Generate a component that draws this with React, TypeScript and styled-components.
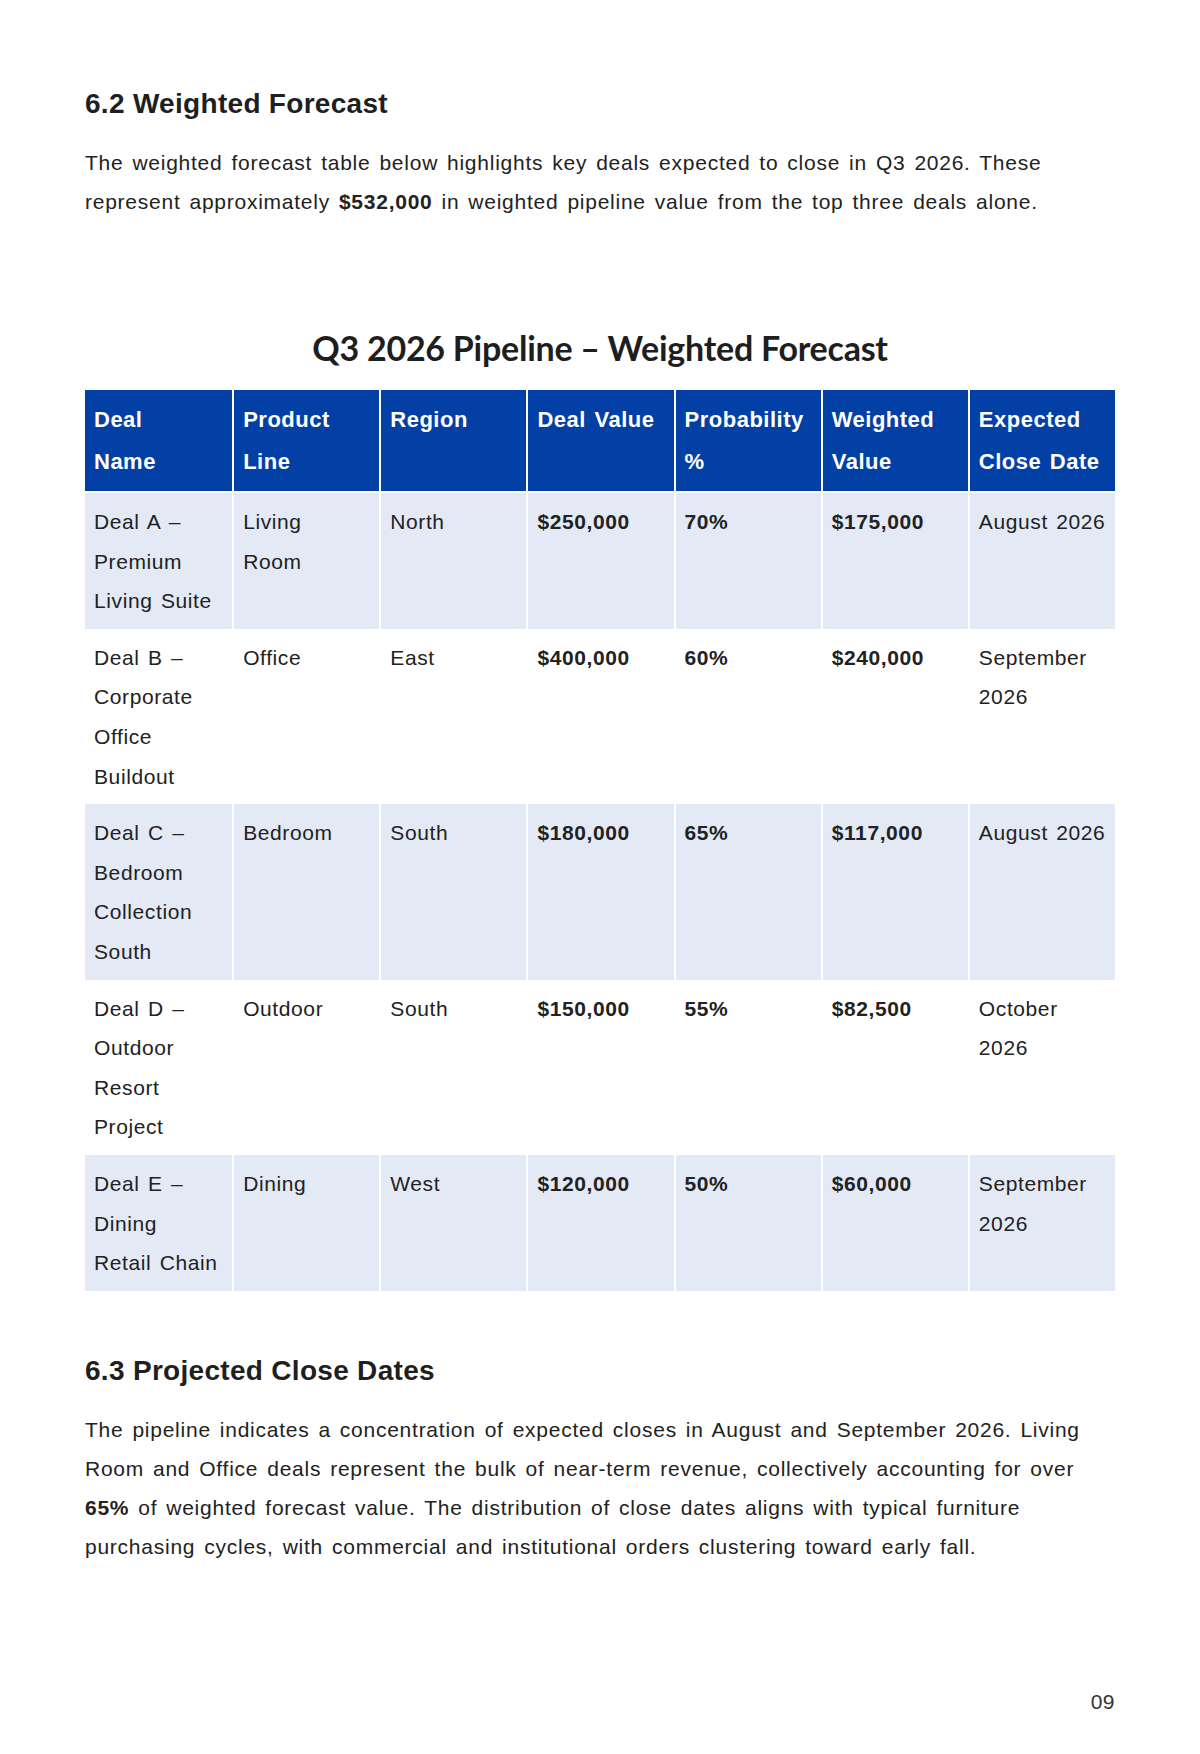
import React from "react";
import styled, { createGlobalStyle } from "styled-components";

type Deal = {
  name: string;
  line: string;
  region: string;
  value: string;
  probability: string;
  weighted: string;
  close: string;
};

const columns = [
  "Deal\nName",
  "Product\nLine",
  "Region",
  "Deal Value",
  "Probability\n%",
  "Weighted\nValue",
  "Expected\nClose Date",
];

// line breaks follow the layout of the printed report
const deals: Deal[] = [
  {
    name: "Deal A –\nPremium\nLiving Suite",
    line: "Living\nRoom",
    region: "North",
    value: "$250,000",
    probability: "70%",
    weighted: "$175,000",
    close: "August 2026",
  },
  {
    name: "Deal B –\nCorporate\nOffice\nBuildout",
    line: "Office",
    region: "East",
    value: "$400,000",
    probability: "60%",
    weighted: "$240,000",
    close: "September\n2026",
  },
  {
    name: "Deal C –\nBedroom\nCollection\nSouth",
    line: "Bedroom",
    region: "South",
    value: "$180,000",
    probability: "65%",
    weighted: "$117,000",
    close: "August 2026",
  },
  {
    name: "Deal D –\nOutdoor\nResort\nProject",
    line: "Outdoor",
    region: "South",
    value: "$150,000",
    probability: "55%",
    weighted: "$82,500",
    close: "October\n2026",
  },
  {
    name: "Deal E –\nDining\nRetail Chain",
    line: "Dining",
    region: "West",
    value: "$120,000",
    probability: "50%",
    weighted: "$60,000",
    close: "September\n2026",
  },
];

const App = () => {
  return (
    <>
      <GlobalStyle />
      <Page>
        <SectionTitle>6.2 Weighted Forecast</SectionTitle>
        <Paragraph>
          The weighted forecast table below highlights key deals expected to
          close in Q3 2026. These represent approximately <b>$532,000</b> in
          weighted pipeline value from the top three deals alone.
        </Paragraph>

        <TableTitle>Q3 2026 Pipeline – Weighted Forecast</TableTitle>
        <Table>
          <thead>
            <tr>
              {columns.map((c) => (
                <HeadCell key={c}>{c}</HeadCell>
              ))}
            </tr>
          </thead>
          <tbody>
            {deals.map((d, i) => (
              <Row key={d.name} $shaded={i % 2 === 0}>
                <Cell>{d.name}</Cell>
                <Cell>{d.line}</Cell>
                <Cell>{d.region}</Cell>
                <Cell $bold>{d.value}</Cell>
                <Cell $bold>{d.probability}</Cell>
                <Cell $bold>{d.weighted}</Cell>
                <Cell>{d.close}</Cell>
              </Row>
            ))}
          </tbody>
        </Table>

        <SectionTitle $gap={62}>6.3 Projected Close Dates</SectionTitle>
        <Paragraph>
          The pipeline indicates a concentration of expected closes in August
          and September 2026. Living Room and Office deals represent the bulk
          of near-term revenue, collectively accounting for over <b>65%</b> of
          weighted forecast value. The distribution of close dates aligns with
          typical furniture purchasing cycles, with commercial and
          institutional orders clustering toward early fall.
        </Paragraph>

        <PageNumber>09</PageNumber>
      </Page>
    </>
  );
};

const GlobalStyle = createGlobalStyle`
  html, body {
    margin: 0;
    padding: 0;
    background: #fff;
  }
  body {
    font-family: "Liberation Sans", Arial, sans-serif;
    color: #222;
  }
`;

const Page = styled.div`
  width: 1200px;
  min-height: 1754px;
  box-sizing: border-box;
  padding: 86px 85px 40px;
  display: flex;
  flex-direction: column;
`;

const SectionTitle = styled.h2<{ $gap?: number }>`
  margin: ${(p) => p.$gap ?? 0}px 0 0;
  font-size: 28px;
  line-height: 36px;
  font-weight: 700;
  letter-spacing: 0.3px;
  color: #1f1f1f;
`;

const Paragraph = styled.p`
  margin: 21px 0 0;
  font-size: 21px;
  line-height: 39px;
  letter-spacing: 0.75px;
  word-spacing: 2.4px;
  color: #222;

  b {
    font-weight: 700;
  }
`;

const TableTitle = styled.h3`
  margin: 105px 0 0;
  text-align: center;
  font-family: Lato, "Liberation Sans", sans-serif;
  font-size: 34px;
  line-height: 44px;
  font-weight: 700;
  letter-spacing: -0.25px;
  color: #1e1e1e;
`;

const Table = styled.table`
  margin-top: 20px;
  width: 100%;
  border-collapse: separate;
  border-spacing: 0;
  table-layout: fixed;
`;

const HeadCell = styled.th`
  background: #0340a6;
  color: #fff;
  text-align: left;
  vertical-align: top;
  padding: 9px 9px 9px;
  font-size: 22px;
  line-height: 41.5px;
  font-weight: 700;
  letter-spacing: 0.5px;
  word-spacing: 2px;
  white-space: pre;
  border-bottom: 2px solid #fff;

  & + & {
    border-left: 2px solid #fff;
  }
`;

const Row = styled.tr<{ $shaded: boolean }>`
  background: ${(p) => (p.$shaded ? "#e3e9f5" : "#fff")};
`;

const Cell = styled.td<{ $bold?: boolean }>`
  vertical-align: top;
  padding: 9px 9px 8px;
  font-size: 21px;
  line-height: 39.6px;
  font-weight: ${(p) => (p.$bold ? 700 : 400)};
  letter-spacing: 0.6px;
  word-spacing: 2px;
  white-space: pre;
  color: #222;

  & + & {
    border-left: 2px solid #fff;
  }
`;

const PageNumber = styled.div`
  margin-top: auto;
  align-self: flex-end;
  font-size: 21px;
  line-height: 24px;
  letter-spacing: 0.5px;
  color: #333;
`;

export default App;
